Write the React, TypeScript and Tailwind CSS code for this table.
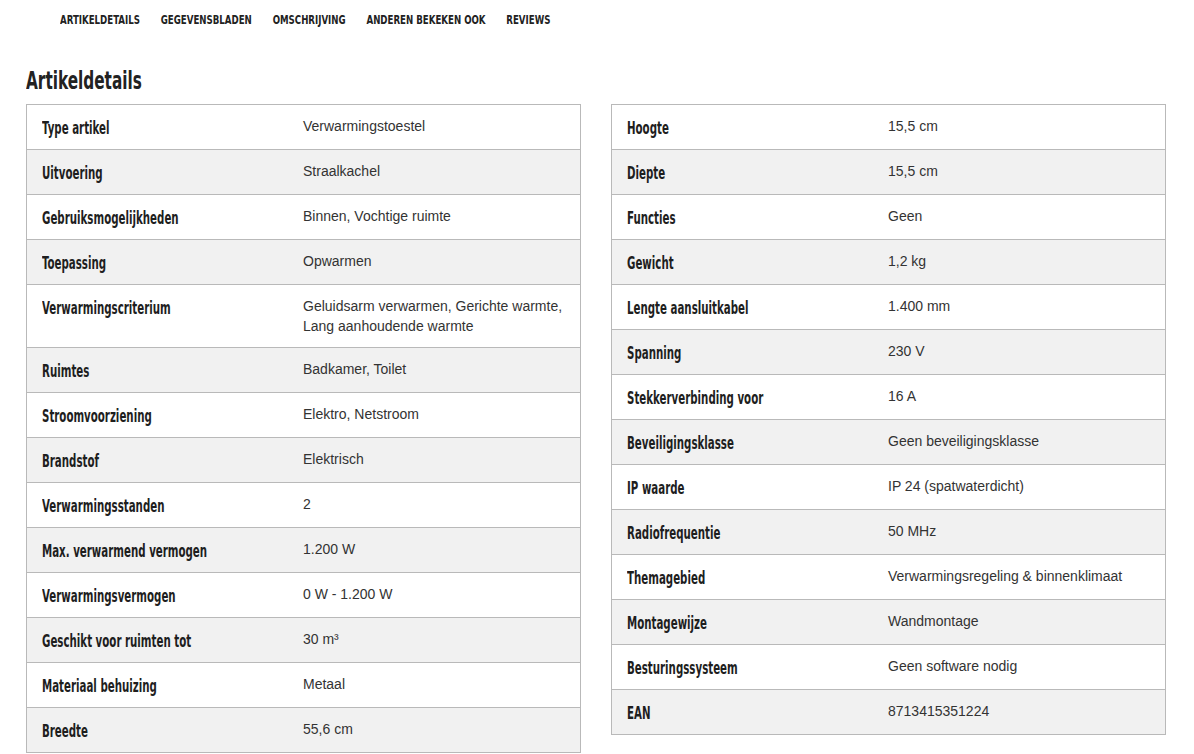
const left: [string, string][] = [
  ['Type artikel', 'Verwarmingstoestel'],
  ['Uitvoering', 'Straalkachel'],
  ['Gebruiksmogelijkheden', 'Binnen, Vochtige ruimte'],
  ['Toepassing', 'Opwarmen'],
  ['Verwarmingscriterium', 'Geluidsarm verwarmen, Gerichte warmte, Lang aanhoudende warmte'],
  ['Ruimtes', 'Badkamer, Toilet'],
  ['Stroomvoorziening', 'Elektro, Netstroom'],
  ['Brandstof', 'Elektrisch'],
  ['Verwarmingsstanden', '2'],
  ['Max. verwarmend vermogen', '1.200 W'],
  ['Verwarmingsvermogen', '0 W - 1.200 W'],
  ['Geschikt voor ruimten tot', '30 m³'],
  ['Materiaal behuizing', 'Metaal'],
  ['Breedte', '55,6 cm'],
];

const right: [string, string][] = [
  ['Hoogte', '15,5 cm'],
  ['Diepte', '15,5 cm'],
  ['Functies', 'Geen'],
  ['Gewicht', '1,2 kg'],
  ['Lengte aansluitkabel', '1.400 mm'],
  ['Spanning', '230 V'],
  ['Stekkerverbinding voor', '16 A'],
  ['Beveiligingsklasse', 'Geen beveiligingsklasse'],
  ['IP waarde', 'IP 24 (spatwaterdicht)'],
  ['Radiofrequentie', '50 MHz'],
  ['Themagebied', 'Verwarmingsregeling & binnenklimaat'],
  ['Montagewijze', 'Wandmontage'],
  ['Besturingssysteem', 'Geen software nodig'],
  ['EAN', '8713415351224'],
];

// no narrow font installed, so the condensed headings are DejaVu Condensed squeezed horizontally
const condensed = "font-['DejaVu_Sans_Condensed','DejaVu_Sans',sans-serif]";

const SpecTable = ({ rows }: { rows: [string, string][] }) => (
  <div className="w-[555px] border border-b-0 border-[#b9b9b9]">
    {rows.map(([label, value], i) => (
      <div
        key={label}
        className={`grid grid-cols-[276px_1fr] border-b border-[#b9b9b9] ${i % 2 === 1 ? 'bg-[#f1f1f1]' : 'bg-white'}`}
      >
        <div className="flex items-start overflow-hidden pl-[15px] pt-[12px] pb-[10px]">
          <span
            className={`${condensed} block origin-left scale-x-[0.67] whitespace-nowrap text-[17px] leading-[22px] font-bold text-[#1e1e1e]`}
          >
            {label}
          </span>
        </div>
        <div className="py-[11px] pr-[15px] font-['Liberation_Sans',Arial,sans-serif] text-[14px] leading-[20px] text-[#333]">
          {value}
        </div>
      </div>
    ))}
  </div>
);

export default function App() {
  const tabs = ['Artikeldetails', 'Gegevensbladen', 'Omschrijving', 'Anderen bekeken ook', 'Reviews'];
  return (
    <div className="min-h-[754px] w-[1194px] overflow-hidden bg-white">
      <nav className="pl-[60px] pt-[12px]">
        <div
          className={`${condensed} flex origin-left scale-x-[0.8] gap-[26px] whitespace-nowrap text-[12px] leading-[16px] font-bold uppercase text-[#222]`}
        >
          {tabs.map((t) => (
            <span key={t}>{t}</span>
          ))}
        </div>
      </nav>
      <div className="flex pl-[26px] pt-[38px] pb-[8px]">
        <h2
          className={`${condensed} block origin-left scale-x-[0.68] whitespace-nowrap text-[25px] leading-[30px] font-bold text-[#222]`}
        >
          Artikeldetails
        </h2>
      </div>
      <div className="flex items-start gap-[30px] pl-[26px]">
        <SpecTable rows={left} />
        <SpecTable rows={right} />
      </div>
    </div>
  );
}
